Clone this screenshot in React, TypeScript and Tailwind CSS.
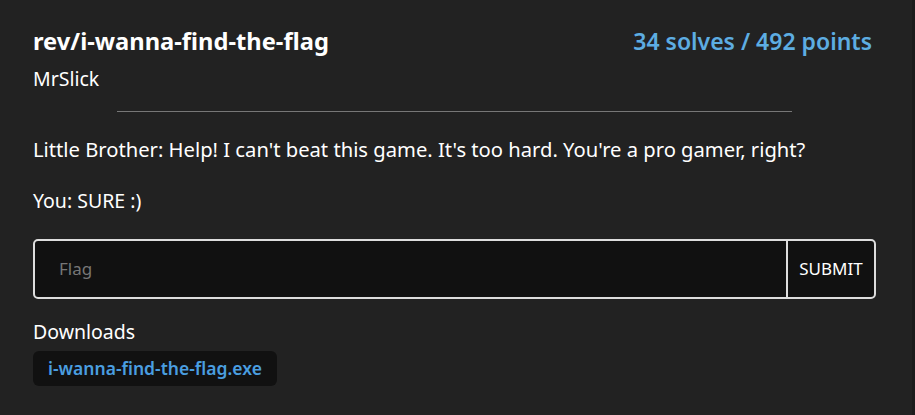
export default function App() {
  return (
    <div className="flex h-[415px] w-[915px] bg-[#1c1c1c] font-['Noto_Sans',sans-serif] text-white">
      <div className="w-[912px] bg-[#222222] pl-[33px] pr-[36px] pt-[27px]">
        <div className="flex items-start justify-between">
          <h1 className="text-[23.7px] font-bold leading-[28px]">rev/i-wanna-find-the-flag</h1>
          <div className="mr-[4px] text-[23px] font-semibold leading-[28px] text-[#5dade2]">34 solves / 492 points</div>
        </div>
        <div className="mt-[12px] text-[19.5px] leading-[24px]">MrSlick</div>
        <hr className="mx-auto mt-[20px] w-[80%] border-t border-[#777777]" />
        <p className="mt-[25px] text-[20.2px] leading-[24px]">
          Little Brother: Help! I can't beat this game. It's too hard. You're a pro gamer, right?
        </p>
        <p className="mt-[28px] text-[19.5px] leading-[24px]">You: SURE :)</p>
        <div className="mt-[26px] flex h-[60px] overflow-hidden rounded-[5px] border-2 border-[#dddddd] bg-[#111111]">
          <input
            placeholder="Flag"
            className="flex-1 bg-transparent px-[24px] text-[17px] text-white outline-none placeholder:text-[#777777]"
          />
          <button className="w-[88px] border-l-2 border-[#dddddd] text-[17px] text-white">SUBMIT</button>
        </div>
        <div className="mt-[21px] text-[19.5px] leading-[24px]">Downloads</div>
        <a className="mt-[7px] inline-flex h-[35px] items-center rounded-[6px] bg-[#111111] px-[15px] text-[17.5px] font-semibold text-[#4a9ee0]">
          i-wanna-find-the-flag.exe
        </a>
      </div>
    </div>
  );
}
